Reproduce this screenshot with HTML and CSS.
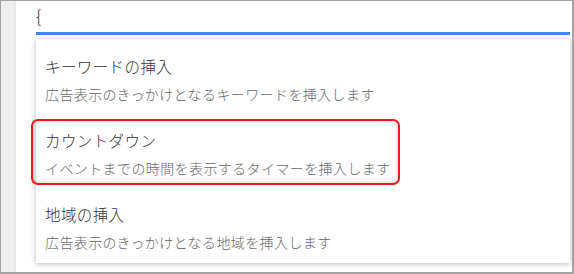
FILE: index.html
```html
<!DOCTYPE html>
<html lang="ja">
<head>
    <meta charset="UTF-8">
    <meta name="viewport" content="width=device-width, initial-scale=1.0">
    <title>Insert</title>
    <link rel="stylesheet" href="styles.css">
</head>
<body>

<div class="frame">
    <div class="side"></div>
    <div class="main">
        <div class="editor">{</div>
        <ul class="menu">
            <li class="item">
                <div class="title">キーワードの挿入</div>
                <div class="desc">広告表示のきっかけとなるキーワードを挿入します</div>
            </li>
            <li class="item marked">
                <div class="title">カウントダウン</div>
                <div class="desc">イベントまでの時間を表示するタイマーを挿入します</div>
            </li>
            <li class="item">
                <div class="title">地域の挿入</div>
                <div class="desc">広告表示のきっかけとなる地域を挿入します</div>
            </li>
        </ul>
    </div>
</div>

</body>
</html>
```

FILE: styles.css
```css
body {
    margin: 0;
    font-family: "Noto Sans CJK JP", "Noto Sans", sans-serif;
    background-color: #fff;
}

.frame {
    display: flex;
    width: 574px;
    height: 274px;
    box-sizing: border-box;
    border: 1px solid #a3a3a3;
    border-right-width: 2px;
    border-bottom-width: 2px;
    overflow: hidden;
}

.side {
    width: 15px;
    flex-shrink: 0;
    background: linear-gradient(to right, #efefef 80%, #e4e4e4);
}

.main {
    flex: 1;
    padding: 0 2px 0 20px;
    background-color: #fff;
}

.editor {
    height: 34px;
    padding-top: 1px;
    box-sizing: border-box;
    font-size: 17px;
    font-weight: 300;
    line-height: 28px;
    color: #222;
    border-bottom: 3px solid #4285f4;
}

.menu {
    list-style: none;
    margin: 4px 0 0;
    padding: 2px 0 0;
    background-color: #fff;
    box-shadow: 0 1px 5px rgba(0, 0, 0, 0.28);
}

.item {
    position: relative;
    padding: 14px 9px 10px;
}

.title {
    font-size: 15.5px;
    font-weight: 300;
    line-height: 22px;
    letter-spacing: 0.4px;
    color: #333;
}

.desc {
    margin-top: 7px;
    font-size: 14px;
    font-weight: 300;
    line-height: 21px;
    letter-spacing: 0.4px;
    color: #666;
}

.marked::after {
    content: "";
    position: absolute;
    left: -5px;
    top: 4px;
    width: 365px;
    height: 62px;
    border: 2px solid #f01818;
    border-radius: 7px;
    box-shadow: inset 0 0 5px rgba(0, 0, 0, 0.22);
}
```
